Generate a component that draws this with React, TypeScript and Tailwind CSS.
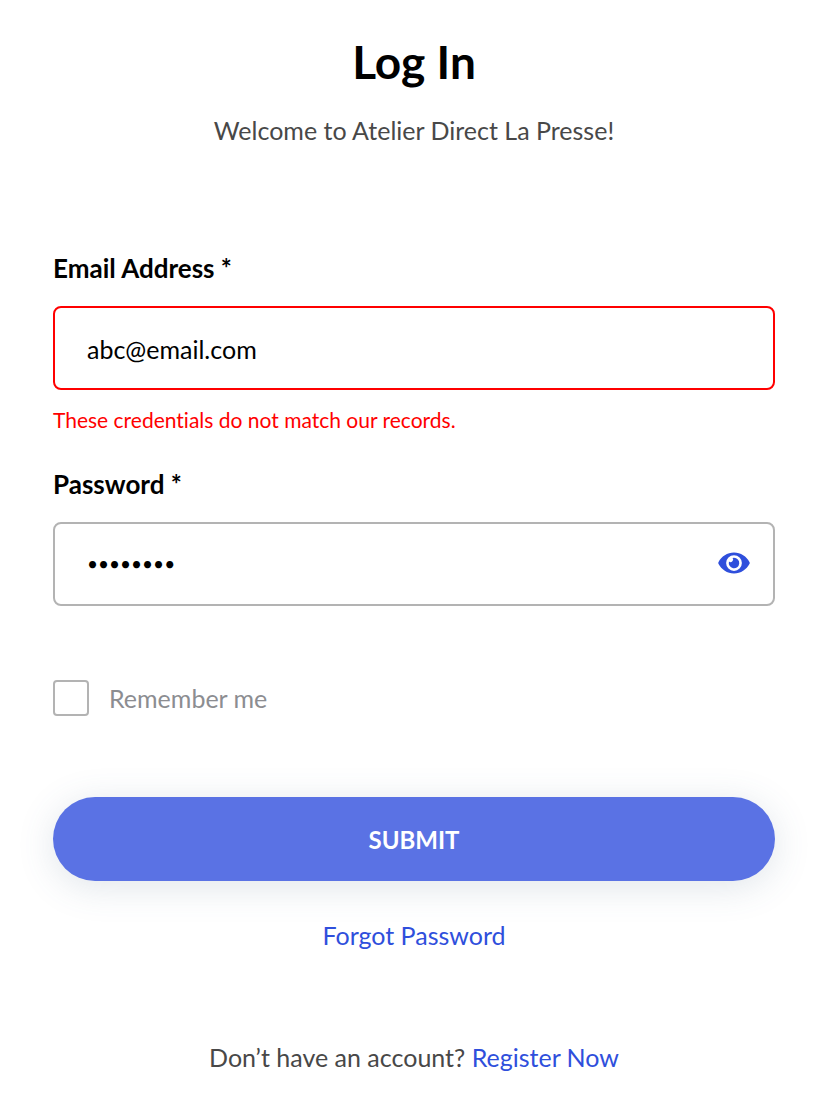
import { useState } from "react";

export default function App() {
  const [email, setEmail] = useState("abc@email.com");
  const [password, setPassword] = useState("password");
  const [visible, setVisible] = useState(false);
  return (
    <main className="min-h-screen bg-white pt-8 pr-[45px] pb-8 pl-[53px] font-['Lato',sans-serif] text-black [font-variant-ligatures:none]">
      <header className="text-center">
        <h1 className="text-[46px] leading-[60px] font-bold">Log In</h1>
        <p className="mt-5 text-[25px] leading-9 text-[#484848]">Welcome to Atelier Direct La Presse!</p>
      </header>
      <form className="mt-[102px]" onSubmit={(e) => e.preventDefault()}>
        <label htmlFor="email" className="block text-[26px] leading-9 font-bold">Email Address *</label>
        <input
          id="email"
          type="email"
          value={email}
          onChange={(e) => setEmail(e.target.value)}
          aria-invalid="true"
          aria-describedby="email-error"
          className="mt-5 block h-[84px] w-full rounded-lg border-2 border-[#ff0000] bg-white px-8 pt-0.5 text-[25px] outline-none"
        />
        <p id="email-error" className="mt-4 text-[21px] leading-7 text-[#ff0000]">These credentials do not match our records.</p>
        <label htmlFor="password" className="mt-8 block text-[26px] leading-9 font-bold">Password *</label>
        <div className="mt-5 flex h-[84px] items-center rounded-lg border-2 border-[#b3b3b3] bg-white pr-[23px] pb-0.5 pl-8">
          <input
            id="password"
            type={visible ? "text" : "password"}
            value={password}
            onChange={(e) => setPassword(e.target.value)}
            className={`h-full min-w-0 flex-1 bg-transparent outline-none ${visible ? "text-[25px]" : "text-[19px]"}`}
          />
          <button type="button" aria-label="Show password" onClick={() => setVisible(!visible)} className="shrink-0 text-[#2f4fdc]">
            <svg viewBox="0 0 576 512" className="h-7 w-8" fill="currentColor">
              <path d="M572.52 241.4C518.29 135.59 410.93 64 288 64S57.68 135.64 3.48 241.41a32.35 32.35 0 0 0 0 29.19C57.71 376.41 165.07 448 288 448s230.32-71.64 284.52-177.41a32.35 32.35 0 0 0 0-29.19zM288 400a144 144 0 1 1 144-144 143.93 143.93 0 0 1-144 144zm0-240a95.31 95.31 0 0 0-25.31 3.79 47.85 47.85 0 0 1-66.9 66.9A95.78 95.78 0 1 0 288 160z" />
            </svg>
          </button>
        </div>
        <div className="mt-[74px] flex items-center">
          <input id="remember" type="checkbox" className="size-9 shrink-0 appearance-none rounded border-2 border-[#b3b3b3] bg-white checked:bg-[#5a72e4]" />
          <label htmlFor="remember" className="pl-5 text-[25px] leading-9 text-[#8c8d91]">Remember me</label>
        </div>
        <button type="submit" className="mt-[81px] block h-[84px] w-full rounded-full bg-[#5a72e4] pt-0.5 text-2xl font-bold text-white shadow-[0_6px_36px_rgba(70,100,130,0.17)]">SUBMIT</button>
      </form>
      <p className="mt-9 text-center text-[25px] leading-9">
        <a href="#forgot" className="text-[#2f4fdc]">Forgot Password</a>
      </p>
      <p className="mt-[86px] text-center text-[25px] leading-9 text-[#484848]">
        Don’t have an account? <a href="#register" className="text-[#2f4fdc]">Register Now</a>
      </p>
    </main>
  );
}
